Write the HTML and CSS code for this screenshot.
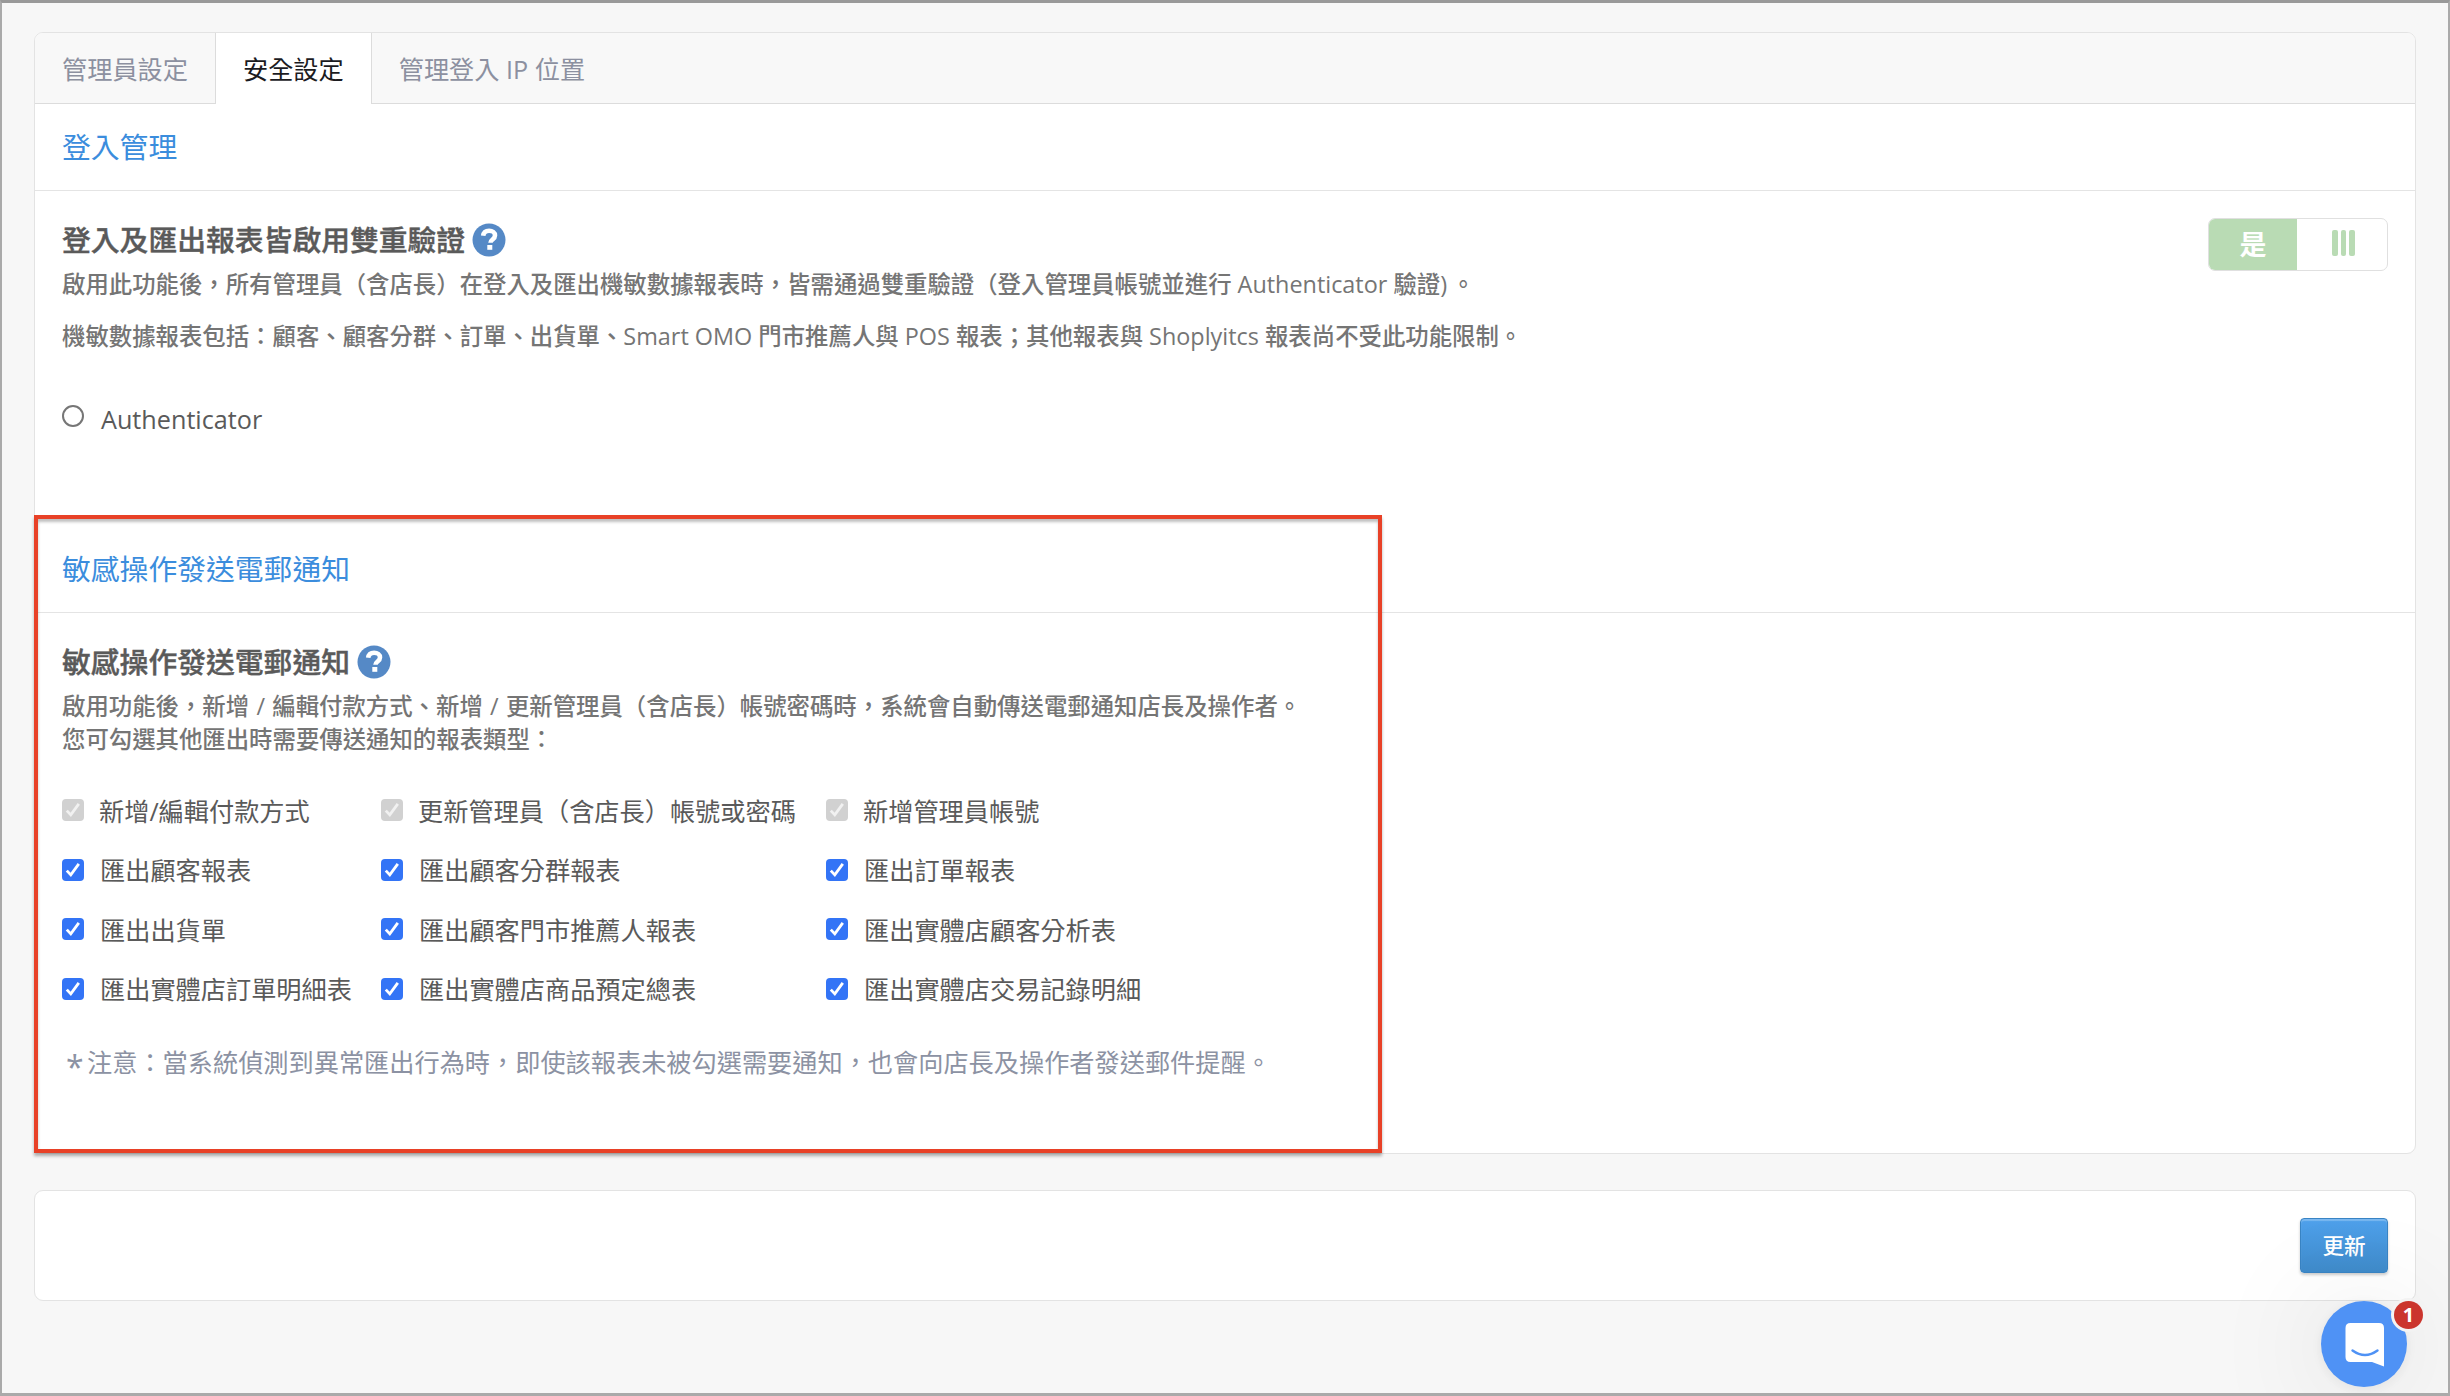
FILE: index.html
```html
<!DOCTYPE html>
<html lang="zh-Hant">
<head>
    <meta charset="utf-8">
    <title>安全設定</title>
    <link rel="stylesheet" href="styles.css">
</head>
<body>
    <div class="card">
        <nav class="tabs">
            <a class="tab">管理員設定</a>
            <a class="tab active">安全設定</a>
            <a class="tab">管理登入 IP 位置</a>
        </nav>

        <section class="section-login">
            <h2 class="section-title">登入管理</h2>
            <div class="section-body">
                <div class="text">
                    <h3 class="heading">登入及匯出報表皆啟用雙重驗證
                        <svg class="help" viewBox="0 0 34 34"><circle cx="17" cy="17" r="16.5"/><path d="M11.2 12.8c.4-3.4 2.7-5.1 5.9-5.1 3.4 0 5.9 1.8 5.9 4.7 0 4-4.5 4-4.5 7.3"/><rect x="15.3" y="22" width="5" height="4.8"/></svg>
                    </h3>
                    <p class="desc">啟用此功能後，所有管理員（含店長）在登入及匯出機敏數據報表時，皆需通過雙重驗證（登入管理員帳號並進行 Authenticator 驗證<span class="paren">)</span>。</p>
                    <p class="desc second">機敏數據報表包括：顧客、顧客分群、訂單、出貨單、Smart OMO 門市推薦人與 POS 報表；其他報表與 Shoplyitcs 報表尚不受此功能限制。</p>
                    <label class="radio"><span class="circle"></span>Authenticator</label>
                </div>
                <div class="switch">
                    <span class="switch-on">是</span>
                    <span class="switch-handle"><i></i><i></i><i></i></span>
                </div>
            </div>
        </section>

        <section class="section-notify">
            <h2 class="section-title">敏感操作發送電郵通知</h2>
            <div class="notify-body">
                <h3 class="heading">敏感操作發送電郵通知
                    <svg class="help" viewBox="0 0 34 34"><circle cx="17" cy="17" r="16.5"/><path d="M11.2 12.8c.4-3.4 2.7-5.1 5.9-5.1 3.4 0 5.9 1.8 5.9 4.7 0 4-4.5 4-4.5 7.3"/><rect x="15.3" y="22" width="5" height="4.8"/></svg>
                </h3>
                <p class="desc">啟用功能後，新增 / 編輯付款方式、新增 / 更新管理員（含店長）帳號密碼時，系統會自動傳送電郵通知店長及操作者。<br>您可勾選其他匯出時需要傳送通知的報表類型：</p>
                <div class="options">
                    <label class="option disabled"><span class="check"><svg viewBox="0 0 22 22"><path d="M4.8 11.6l4 4.3 8-11"/></svg></span>新增/編輯付款方式</label>
                    <label class="option disabled"><span class="check"><svg viewBox="0 0 22 22"><path d="M4.8 11.6l4 4.3 8-11"/></svg></span>更新管理員（含店長）帳號或密碼</label>
                    <label class="option disabled"><span class="check"><svg viewBox="0 0 22 22"><path d="M4.8 11.6l4 4.3 8-11"/></svg></span>新增管理員帳號</label>
                    <label class="option"><span class="check"><svg viewBox="0 0 22 22"><path d="M4.8 11.6l4 4.3 8-11"/></svg></span>匯出顧客報表</label>
                    <label class="option"><span class="check"><svg viewBox="0 0 22 22"><path d="M4.8 11.6l4 4.3 8-11"/></svg></span>匯出顧客分群報表</label>
                    <label class="option"><span class="check"><svg viewBox="0 0 22 22"><path d="M4.8 11.6l4 4.3 8-11"/></svg></span>匯出訂單報表</label>
                    <label class="option"><span class="check"><svg viewBox="0 0 22 22"><path d="M4.8 11.6l4 4.3 8-11"/></svg></span>匯出出貨單</label>
                    <label class="option"><span class="check"><svg viewBox="0 0 22 22"><path d="M4.8 11.6l4 4.3 8-11"/></svg></span>匯出顧客門市推薦人報表</label>
                    <label class="option"><span class="check"><svg viewBox="0 0 22 22"><path d="M4.8 11.6l4 4.3 8-11"/></svg></span>匯出實體店顧客分析表</label>
                    <label class="option"><span class="check"><svg viewBox="0 0 22 22"><path d="M4.8 11.6l4 4.3 8-11"/></svg></span>匯出實體店訂單明細表</label>
                    <label class="option"><span class="check"><svg viewBox="0 0 22 22"><path d="M4.8 11.6l4 4.3 8-11"/></svg></span>匯出實體店商品預定總表</label>
                    <label class="option"><span class="check"><svg viewBox="0 0 22 22"><path d="M4.8 11.6l4 4.3 8-11"/></svg></span>匯出實體店交易記錄明細</label>
                </div>
                <p class="note"><span class="star">*</span>注意：當系統偵測到異常匯出行為時，即使該報表未被勾選需要通知，也會向店長及操作者發送郵件提醒。</p>
            </div>
            <div class="highlight"></div>
        </section>
    </div>

    <div class="card footer">
        <button class="btn">更新</button>
    </div>

    <div class="chat">
        <svg class="chat-icon" viewBox="0 0 86 86">
            <path fill="#fff" d="M29.500 22h28.500q5 0 5 5v38.500l-12-4.500h-21.500q-5 0-5-5v-29q0-5 5-5z"/>
            <path fill="none" stroke="#4f92f5" stroke-width="2.400" stroke-linecap="round" d="M31.500 49.500q12.500 9 25 0"/>
        </svg>
        <span class="badge">1</span>
    </div>
</body>
</html>
```
FILE: styles.css
```css
* {
    box-sizing: border-box;
}
html {
    height: 100%;
    overflow: hidden;
}
body {
    position: relative;
    width: 2450px;
    height: 1396px;
    margin: 0;
    padding: 29px 32px 0;
    overflow: hidden;
    background: #f7f7f7;
    border: 2px solid #aaa;
    border-top: 3px solid #999;
    border-bottom: 3px solid #aaa;
    font-family: "Open Sans", "Noto Sans CJK TC", sans-serif;
    font-size: 25.2px;
    color: #5a5a5a;
}
h2, h3, p {
    margin: 0;
}
.card {
    width: 2382px;
    background: #fff;
    border: 1px solid #e3e3e3;
    border-radius: 9px;
}

/* tabs */
.tabs {
    display: flex;
    height: 71px;
    background: #f8f8f8;
    border-bottom: 1px solid #dcdcdc;
    border-radius: 8px 8px 0 0;
}
.tab {
    height: 71px;
    padding: 0 27px;
    line-height: 73px;
    color: #8c90a0;
}
.tab.active {
    background: #fff;
    border: solid #dcdcdc;
    border-width: 0 1px;
    color: #1b1b1f;
}

/* sections */
.section-title {
    height: 87px;
    padding-left: 27px;
    border-bottom: 1px solid #e4e4e4;
    line-height: 85px;
    font-size: 28.8px;
    font-weight: 400;
    color: #3b8ddd;
}
.section-login {
    height: 412px;
}
.section-body {
    display: flex;
    justify-content: space-between;
    padding: 27px 27px 0;
}
.heading {
    display: flex;
    align-items: center;
    gap: 7px;
    height: 45px;
    line-height: 43px;
    font-size: 28.8px;
    font-weight: 500;
    -webkit-text-stroke: .4px;
}
.help {
    width: 34px;
    height: 34px;
    fill: #5589c6;
}
.help path {
    fill: none;
    stroke: #fff;
    stroke-width: 4.6;
}
.help rect {
    fill: #fff;
}
.desc {
    line-height: 33px;
    font-size: 23.4px;
    font-weight: 500;
    color: #757575;
    white-space: nowrap;
}
.section-body .heading {
    margin-top: -1px;
}
.section-body .desc {
    margin-top: 6px;
}
.section-body .second {
    margin-top: 19px;
}
.paren {
    margin-right: 4.5px;
}
.radio {
    display: flex;
    gap: 17px;
    margin-top: 47px;
    line-height: 38px;
}
.circle {
    width: 22px;
    height: 22px;
    margin-top: 5px;
    border: 2px solid #767676;
    border-radius: 50%;
}

/* toggle */
.switch {
    display: flex;
    width: 180px;
    height: 53px;
    border: 1px solid #e0e0e0;
    border-radius: 7px;
    overflow: hidden;
}
.switch-on {
    width: 88px;
    background: #b9dbb4;
    line-height: 52px;
    text-align: center;
    font-size: 27px;
    font-weight: 700;
    color: #fff;
}
.switch-handle {
    display: flex;
    flex: 1;
    justify-content: center;
    gap: 3px;
    padding-top: 11px;
    padding-left: 3px;
}
.switch-handle i {
    width: 5.4px;
    height: 26px;
    background: #b9dbb4;
    border-radius: 2px;
}

/* notification options */
.section-notify {
    position: relative;
    height: 637px;
    padding-top: 10px;
}
.notify-body {
    padding: 26px 27px 0;
}
.notify-body .desc {
    margin-top: 6px;
    word-spacing: 1.2px;
}
.options {
    display: grid;
    grid-template-columns: 319px 445px 400px;
    grid-auto-rows: 59.5px;
    margin-top: 24px;
}
.option {
    display: flex;
    align-items: center;
    gap: 16px;
    white-space: nowrap;
}
.option.disabled {
    gap: 15px;
}
.check {
    width: 22px;
    height: 22px;
    margin-top: 1px;
    background: #3374f6;
    border-radius: 4px;
}
.check svg {
    display: block;
    fill: none;
    stroke: #fff;
    stroke-width: 2.8;
}
.disabled .check {
    background: #d1d1d1;
}
.disabled .check svg {
    stroke: #f1f1f1;
}
.note {
    margin-top: 24px;
    padding-left: 4px;
    line-height: 40px;
    color: #8c92a3;
}
.star {
    display: inline-block;
    width: 21px;
    font-size: 32px;
    line-height: 20px;
    vertical-align: -7px;
}
.highlight {
    position: absolute;
    top: -1px;
    left: -1px;
    width: 1348px;
    height: 638px;
    border: 4px solid #e84127;
    box-shadow: 0 3px 3px rgba(0, 0, 0, .3), inset 0 3px 3px rgba(0, 0, 0, .25);
}

/* footer */
.footer {
    display: flex;
    justify-content: flex-end;
    height: 111px;
    margin-top: 36px;
    padding: 27px 27px 0;
}
.btn {
    width: 88px;
    height: 55px;
    padding: 0 0 2px;
    background: linear-gradient(#4fa1ec, #3f8bca);
    border: 1px solid #3984c4;
    border-radius: 4px;
    box-shadow: 0 2px 3px rgba(0, 0, 0, .2), inset 0 2px 1px rgba(255, 255, 255, .25);
    font: 500 21.6px "Open Sans", "Noto Sans CJK TC", sans-serif;
    color: #fff;
}

/* chat launcher */
.chat {
    position: absolute;
    left: 2319px;
    top: 1298px;
    width: 86px;
    height: 86px;
    background: #4f92f5;
    border-radius: 50%;
    box-shadow: 0 2px 12px rgba(0, 0, 0, .06), 0 4px 120px rgba(0, 0, 0, .13);
}
.chat-icon {
    display: block;
}
.badge {
    position: absolute;
    left: 73px;
    top: 0;
    width: 29px;
    height: 28px;
    background: #cb352d;
    border-radius: 50%;
    box-shadow: 0 0 0 3px #f3f3f3;
    line-height: 28px;
    text-align: center;
    font-size: 20px;
    font-weight: 700;
    color: #fff;
}
```
